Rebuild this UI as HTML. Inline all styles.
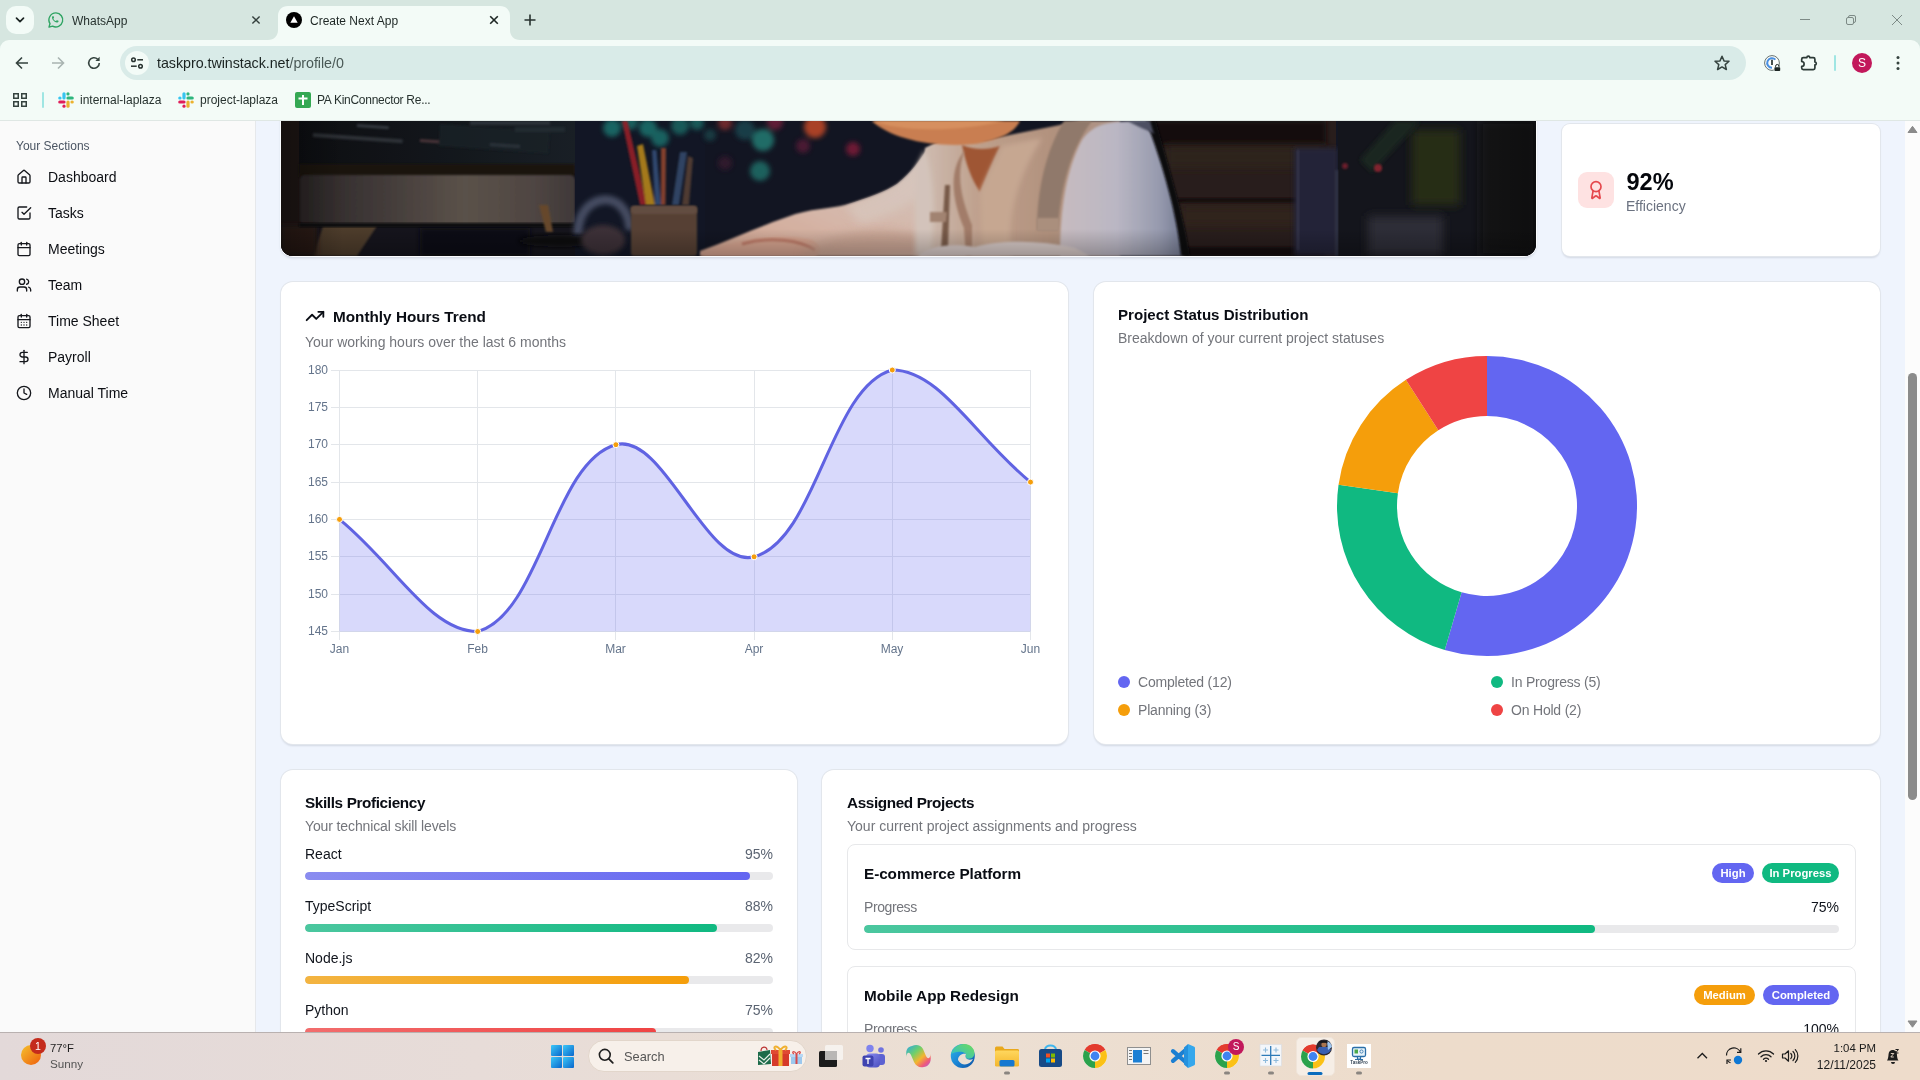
<!DOCTYPE html>
<html lang="en">
<head>
<meta charset="utf-8">
<title>Create Next App</title>
<style>
*{box-sizing:border-box;margin:0;padding:0}
html,body{width:1920px;height:1080px;overflow:hidden;background:#eef4fd}
body{font-family:"Liberation Sans","DejaVu Sans",sans-serif;color:#0b0f19;position:relative;-webkit-font-smoothing:antialiased}
.abs{position:absolute}
svg{display:block;overflow:visible}
/* ---------- browser chrome ---------- */
#tabstrip{position:absolute;left:0;top:0;width:1920px;height:52px;background:#d6e6e0}
#toolbar{position:absolute;left:0;top:40px;width:1920px;height:80px;background:#f3fbf7;border-radius:9px 9px 0 0}
#chromeline{position:absolute;left:0;top:120px;width:1920px;height:1px;background:#dfe7e4}
.tabtxt{position:absolute;top:13px;font-size:12px;color:#27322f;white-space:nowrap;line-height:16px}
#omni{position:absolute;left:120px;top:46px;width:1626px;height:34px;border-radius:17px;background:#d9ebe8}
#url{position:absolute;left:157px;top:54px;font-size:14.3px;line-height:18px;color:#1a2321;white-space:nowrap;letter-spacing:-0.05px}
#url span{color:#4a5956}
.bm{position:absolute;top:92px;font-size:12px;line-height:16px;color:#27322f;white-space:nowrap}
/* ---------- sidebar ---------- */
#side{position:absolute;left:0;top:121px;width:256px;height:911px;background:#fafafa;border-right:1px solid #e6e8eb}
#side .lbl{position:absolute;left:16px;top:17px;font-size:12px;line-height:16px;color:#4b5563}
.nav{position:absolute;left:16px;height:20px;display:flex;align-items:center;font-size:14px;color:#0c0e13;white-space:nowrap}
.nav svg{width:16px;height:16px;margin-right:16px;stroke:#15171c;fill:none;stroke-width:2;stroke-linecap:round;stroke-linejoin:round}
/* ---------- main ---------- */
#main{position:absolute;left:256px;top:121px;width:1649px;height:911px;background:#eff4fd;overflow:hidden}
.card{position:absolute;background:#fff;border-radius:12px;box-shadow:0 0 0 1px #e2e6ec,0 1.5px 2px rgba(40,50,70,.14)}
.h3{position:absolute;font-weight:700;font-size:16px;line-height:20px;color:#0a0d14;white-space:nowrap}
.sub{position:absolute;font-size:13.6px;line-height:18px;color:#73757b;white-space:nowrap}
.tick{font-family:"Liberation Sans",sans-serif;font-size:12px;fill:#64748b}
.bar{position:absolute;height:8px;border-radius:4px;background:#e9e9eb;overflow:hidden}
.bar i{display:block;height:8px;border-radius:4px}
.sk{position:absolute;font-size:14px;line-height:18px;color:#10141c;white-space:nowrap}
.pc{position:absolute;font-size:14px;line-height:18px;color:#5b6472;white-space:nowrap;text-align:right}
.badge{position:absolute;height:20px;border-radius:10px;color:#fff;font-weight:700;font-size:11.3px;line-height:20px;text-align:center;white-space:nowrap}
/* ---------- scrollbar ---------- */
#sb{position:absolute;left:1905px;top:121px;width:15px;height:911px;background:#fcfcfc}
/* ---------- taskbar ---------- */
#task{position:absolute;left:0;top:1032px;width:1920px;height:48px;background:linear-gradient(90deg,#e3d9d9 0%,#e7dcd8 25%,#ecdfd3 50%,#eddccb 75%,#eedccb 100%);border-top:1px solid #b9b1b0}
</style>
</head>
<body>
<div id="root" style="position:absolute;left:0;top:0;width:1920px;height:1080px;overflow:hidden;will-change:transform">
<!-- ================= BROWSER CHROME ================= -->
<div id="tabstrip"></div>
<div id="toolbar"></div>
<div id="chromeline"></div>
<!-- tab search button -->
<div class="abs" style="left:6px;top:6px;width:28px;height:28px;border-radius:10px;background:#f3fbf7"></div>
<svg class="abs" style="left:14px;top:14px" width="12" height="12" viewBox="0 0 12 12"><path d="M2.5 4.2 L6 7.7 L9.5 4.2" fill="none" stroke="#1d2624" stroke-width="1.7" stroke-linecap="round" stroke-linejoin="round"/></svg>
<!-- whatsapp tab -->
<svg class="abs" style="left:48px;top:12px" width="16" height="16" viewBox="0 0 16 16"><path d="M8 0.9a7 7 0 0 0-6 10.7L1 15.1l3.6-.95A7 7 0 1 0 8 .9z" fill="none" stroke="#2fa463" stroke-width="1.400" stroke-linejoin="round"/><path d="M5.6 4.4c-.2-.4-.5-.4-.8-.3-.6.4-.9 1-.8 1.700.3 1.600 1.300 2.900 2.700 3.900 1 .700 2 .900 2.800.700.600-.200 1-.600 1.100-1.200 0-.200 0-.300-.200-.400l-1.300-.600c-.200-.100-.400 0-.500.100l-.500.600c-.100.100-.300.200-.500.100-1-.5-1.700-1.200-2.200-2.100-.1-.2 0-.3.100-.4l.4-.5c.1-.2.1-.3.1-.5z" fill="#2fa463"/></svg>
<div class="tabtxt" style="left:72px">WhatsApp</div>
<svg class="abs" style="left:250px;top:14px" width="12" height="12" viewBox="0 0 12 12"><path d="M2.400 2.400 9.600 9.600M9.600 2.400 2.400 9.600" stroke="#34403d" stroke-width="1.400" fill="none"/></svg>
<!-- active tab -->
<svg class="abs" style="left:268px;top:6px" width="252" height="34" viewBox="0 0 252 34"><path d="M0 34 C6 34 10 30 10 24 L10 10 C10 4 14 0 20 0 L232 0 C238 0 242 4 242 10 L242 24 C242 30 246 34 252 34 Z" fill="#f3fbf7"/></svg>
<svg class="abs" style="left:286px;top:12px" width="16" height="16" viewBox="0 0 16 16"><circle cx="8" cy="8" r="8" fill="#000"/><path d="M8 4.300 L11.700 10.700 L4.300 10.700 Z" fill="#fff"/></svg>
<div class="tabtxt" style="left:310px;color:#1d2624">Create Next App</div>
<svg class="abs" style="left:488px;top:14px" width="12" height="12" viewBox="0 0 12 12"><path d="M2.200 2.200 9.800 9.800M9.800 2.200 2.200 9.800" stroke="#1d2624" stroke-width="1.600" fill="none"/></svg>
<svg class="abs" style="left:523px;top:13px" width="14" height="14" viewBox="0 0 14 14"><path d="M7 1.500V12.500M1.500 7H12.500" stroke="#27322f" stroke-width="1.600" fill="none"/></svg>
<!-- window controls -->
<svg class="abs" style="left:1799px;top:14px" width="12" height="12" viewBox="0 0 12 12"><path d="M1 5.500H11" stroke="#7d8a86" stroke-width="1" fill="none"/></svg>
<svg class="abs" style="left:1845px;top:14px" width="12" height="12" viewBox="0 0 12 12"><rect x="1.500" y="3.500" width="7" height="7" rx="1.500" fill="none" stroke="#7d8a86" stroke-width="1"/><path d="M3.500 3.500V3A1.500 1.500 0 0 1 5 1.500H9A1.500 1.500 0 0 1 10.500 3V7A1.500 1.500 0 0 1 9 8.500H8.500" fill="none" stroke="#7d8a86" stroke-width="1"/></svg>
<svg class="abs" style="left:1891px;top:14px" width="12" height="12" viewBox="0 0 12 12"><path d="M1 1 11 11M11 1 1 11" stroke="#7d8a86" stroke-width="1" fill="none"/></svg>
<!-- nav buttons -->
<svg class="abs" style="left:14px;top:55px" width="16" height="16" viewBox="0 0 16 16"><path d="M14 8H2.800M8 2.500 2.500 8 8 13.500" fill="none" stroke="#35433f" stroke-width="1.600"/></svg>
<svg class="abs" style="left:50px;top:55px" width="16" height="16" viewBox="0 0 16 16"><path d="M2 8H13.200M8 2.500 13.500 8 8 13.500" fill="none" stroke="#a9b4b1" stroke-width="1.600"/></svg>
<svg class="abs" style="left:86px;top:55px" width="16" height="16" viewBox="0 0 16 16"><path d="M13.300 8A5.300 5.300 0 1 1 11.700 4.200" fill="none" stroke="#35433f" stroke-width="1.600"/><path d="M13.600 1.700V5.900H9.400Z" fill="#35433f"/></svg>
<!-- omnibox -->
<div id="omni"></div>
<div class="abs" style="left:125px;top:51px;width:24px;height:24px;border-radius:12px;background:#f3fbf7"></div>
<svg class="abs" style="left:129px;top:55px" width="16" height="16" viewBox="0 0 16 16"><g fill="none" stroke="#27322f" stroke-width="1.500"><circle cx="4.500" cy="4.800" r="1.800"/><path d="M8.300 4.800H14"/><circle cx="11.500" cy="11.200" r="1.800"/><path d="M2 11.200H7.700"/></g></svg>
<div id="url">taskpro.twinstack.net<span>/profile/0</span></div>
<svg class="abs" style="left:1713px;top:54px" width="18" height="18" viewBox="0 0 18 18"><path d="M9 2.300 11 6.900 16 7.300 12.200 10.600 13.400 15.500 9 12.900 4.600 15.500 5.800 10.600 2 7.300 7 6.900Z" fill="none" stroke="#35433f" stroke-width="1.500" stroke-linejoin="round"/></svg>
<!-- extension icons -->
<svg class="abs" style="left:1762px;top:53px" width="20" height="20" viewBox="1762 53 20 20"><circle cx="1772" cy="63" r="7.400" fill="#fbfdfc" stroke="#66726f" stroke-width="1"/><path d="M1775.400 59.600 A4.800 4.800 0 1 0 1772 67.800" fill="none" stroke="#4a90e2" stroke-width="2"/><path d="M1772 59.800V65" stroke="#27322f" stroke-width="1.700"/><rect x="1773.800" y="66.300" width="7" height="5.200" rx="1" fill="#f3fbf7"/><rect x="1774.400" y="67.200" width="5.800" height="3.800" rx=".8" fill="#1d2624"/><path d="M1775.600 67.200V66.200A1.700 1.700 0 0 1 1779 66.200V67.200" fill="none" stroke="#1d2624" stroke-width="1"/></svg>
<svg class="abs" style="left:1799px;top:53px" width="20" height="20" viewBox="1799 53 20 20"><path d="M1803.300 57.600 H1806.900 A1.400 1.400 0 0 1 1809.700 57.600 H1813.300 A1.600 1.600 0 0 1 1814.900 59.200 V62 A1.400 1.400 0 0 1 1814.900 64.800 V68 A1.600 1.600 0 0 1 1813.300 69.600 H1803.300 A1.600 1.600 0 0 1 1801.700 68 V66.300 A2.400 2.400 0 0 0 1801.700 61.500 V59.200 A1.600 1.600 0 0 1 1803.300 57.600 Z" fill="none" stroke="#2c3a37" stroke-width="1.700" stroke-linejoin="round"/></svg>
<div class="abs" style="left:1834px;top:55px;width:2px;height:16px;border-radius:1px;background:#9fe6e3"></div>
<div class="abs" style="left:1852px;top:53px;width:20px;height:20px;border-radius:10px;background:#c2185b;color:#fff;font-size:12px;line-height:20px;text-align:center">S</div>
<svg class="abs" style="left:1889px;top:54px" width="18" height="18" viewBox="0 0 18 18"><g fill="#35433f"><circle cx="9" cy="3.500" r="1.500"/><circle cx="9" cy="9" r="1.500"/><circle cx="9" cy="14.500" r="1.500"/></g></svg>
<!-- bookmarks bar -->
<svg class="abs" style="left:12px;top:92px" width="16" height="16" viewBox="0 0 16 16"><g fill="none" stroke="#35433f" stroke-width="1.500"><rect x="1.750" y="1.750" width="4.500" height="4.500"/><rect x="9.750" y="1.750" width="4.500" height="4.500"/><rect x="1.750" y="9.750" width="4.500" height="4.500"/><rect x="9.750" y="9.750" width="4.500" height="4.500"/></g></svg>
<div class="abs" style="left:42px;top:92px;width:2px;height:16px;border-radius:1px;background:#9fe6e3"></div>
<svg class="abs" style="left:58px;top:92px" width="16" height="16" viewBox="0 0 16 16" id="slk"><g stroke-width="3.200" stroke-linecap="round" fill="none"><path d="M6 1.800V6" stroke="#36c5f0"/><path d="M1.800 6H2" stroke="#36c5f0"/><path d="M14.200 6H10" stroke="#2eb67d"/><path d="M10 1.800V2" stroke="#2eb67d"/><path d="M10 14.200V10" stroke="#ecb22e"/><path d="M14.200 10H14" stroke="#ecb22e"/><path d="M1.800 10H6" stroke="#e01e5a"/><path d="M6 14.200V14" stroke="#e01e5a"/></g></svg>
<div class="bm" style="left:80px">internal-laplaza</div>
<svg class="abs" style="left:178px;top:92px" width="16" height="16" viewBox="0 0 16 16"><g stroke-width="3.200" stroke-linecap="round" fill="none"><path d="M6 1.800V6" stroke="#36c5f0"/><path d="M1.800 6H2" stroke="#36c5f0"/><path d="M14.200 6H10" stroke="#2eb67d"/><path d="M10 1.800V2" stroke="#2eb67d"/><path d="M10 14.200V10" stroke="#ecb22e"/><path d="M14.200 10H14" stroke="#ecb22e"/><path d="M1.800 10H6" stroke="#e01e5a"/><path d="M6 14.200V14" stroke="#e01e5a"/></g></svg>
<div class="bm" style="left:200px">project-laplaza</div>
<svg class="abs" style="left:295px;top:92px" width="16" height="16" viewBox="0 0 16 16"><rect x="0" y="0" width="16" height="16" rx="2" fill="#34a853"/><path d="M8 3V13M3.500 6.500H12.500" stroke="#fff" stroke-width="2" fill="none"/></svg>
<div class="bm" style="left:317px;letter-spacing:-0.28px">PA KinConnector Re...</div>
<!--CHROME-->

<!-- ================= SIDEBAR ================= -->
<div id="side">
<div class="lbl">Your Sections</div>
<div class="nav" style="top:46px"><svg viewBox="0 0 24 24"><path d="M15 21v-8a1 1 0 0 0-1-1h-4a1 1 0 0 0-1 1v8"/><path d="M3 10a2 2 0 0 1 .709-1.528l7-5.999a2 2 0 0 1 2.582 0l7 5.999A2 2 0 0 1 21 10v9a2 2 0 0 1-2 2H5a2 2 0 0 1-2-2z"/></svg>Dashboard</div>
<div class="nav" style="top:82px"><svg viewBox="0 0 24 24"><path d="m9 11 3 3L22 4"/><path d="M21 12v7a2 2 0 0 1-2 2H5a2 2 0 0 1-2-2V5a2 2 0 0 1 2-2h11"/></svg>Tasks</div>
<div class="nav" style="top:118px"><svg viewBox="0 0 24 24"><path d="M8 2v4"/><path d="M16 2v4"/><rect width="18" height="18" x="3" y="4" rx="2"/><path d="M3 10h18"/></svg>Meetings</div>
<div class="nav" style="top:154px"><svg viewBox="0 0 24 24"><path d="M16 21v-2a4 4 0 0 0-4-4H6a4 4 0 0 0-4 4v2"/><circle cx="9" cy="7" r="4"/><path d="M22 21v-2a4 4 0 0 0-3-3.870"/><path d="M16 3.130a4 4 0 0 1 0 7.750"/></svg>Team</div>
<div class="nav" style="top:190px"><svg viewBox="0 0 24 24"><path d="M8 2v4"/><path d="M16 2v4"/><rect width="18" height="18" x="3" y="4" rx="2"/><path d="M3 10h18"/><path d="M8 14h.01"/><path d="M12 14h.01"/><path d="M16 14h.01"/><path d="M8 18h.01"/><path d="M12 18h.01"/><path d="M16 18h.01"/></svg>Time Sheet</div>
<div class="nav" style="top:226px"><svg viewBox="0 0 24 24"><line x1="12" x2="12" y1="2" y2="22"/><path d="M17 5H9.500a3.500 3.500 0 0 0 0 7h5a3.500 3.500 0 0 1 0 7H6"/></svg>Payroll</div>
<div class="nav" style="top:262px"><svg viewBox="0 0 24 24"><circle cx="12" cy="12" r="10"/><polyline points="12 6 12 12 16 14"/></svg>Manual Time</div>
<!--NAV-->
</div>

<!-- ================= MAIN ================= -->
<div id="main">
<div class="abs" id="pg" style="left:-256px;top:-121px;width:1920px;height:1080px">
<!-- hero image -->
<div class="abs" id="hero" style="left:281px;top:100px;width:1255px;height:156px;border-radius:0 0 12px 12px;overflow:hidden;background:#15141a;box-shadow:0 0 0 1px #fbfcfe,0 2px 3px rgba(40,50,70,.18)">
<svg class="abs" style="left:0;top:21px" width="1255" height="135" viewBox="281 121 1255 135" preserveAspectRatio="none">
<defs>
<filter id="b1" x="-20%" y="-20%" width="140%" height="140%"><feGaussianBlur stdDeviation="1.300"/></filter>
<filter id="b2" x="-20%" y="-20%" width="140%" height="140%"><feGaussianBlur stdDeviation="2.600"/></filter>
<filter id="b4" x="-30%" y="-30%" width="160%" height="160%"><feGaussianBlur stdDeviation="5"/></filter>
<filter id="b8" x="-40%" y="-40%" width="180%" height="180%"><feGaussianBlur stdDeviation="9"/></filter>
<linearGradient id="chin" x1="0" x2="1" y1="0" y2="0"><stop offset="0" stop-color="#2f2a29"/><stop offset=".25" stop-color="#453d3b"/><stop offset=".6" stop-color="#645a51"/><stop offset=".85" stop-color="#574d48"/><stop offset="1" stop-color="#463e3d"/></linearGradient>
<linearGradient id="scr" x1="0" x2="1" y1="0" y2="0"><stop offset="0" stop-color="#0e0f12"/><stop offset=".5" stop-color="#14181c"/><stop offset="1" stop-color="#1b2228"/></linearGradient>
<linearGradient id="sleeveR" x1="0" x2="1" y1="0" y2="0"><stop offset="0" stop-color="#ddd0d3"/><stop offset=".45" stop-color="#cfcbd8"/><stop offset=".8" stop-color="#a7abc0"/><stop offset="1" stop-color="#7f86a0"/></linearGradient>
<linearGradient id="arm" x1="0" x2="1" y1="1" y2="0"><stop offset="0" stop-color="#e6b29a"/><stop offset=".35" stop-color="#ecc9b8"/><stop offset=".7" stop-color="#ead8cd"/><stop offset="1" stop-color="#e2cdc0"/></linearGradient>
<linearGradient id="hood" x1="0" x2="1" y1="0" y2="0"><stop offset="0" stop-color="#e6d2c5"/><stop offset=".3" stop-color="#d3b19a"/><stop offset=".65" stop-color="#c6a28b"/><stop offset="1" stop-color="#bfa394"/></linearGradient>
<linearGradient id="panel" x1="0" x2="0" y1="0" y2="1"><stop offset="0" stop-color="#1b1312"/><stop offset=".35" stop-color="#33262200"/><stop offset="1" stop-color="#1b131200"/></linearGradient>
<linearGradient id="vig" x1="0" x2="1" y1="0" y2="0"><stop offset="0" stop-color="#000" stop-opacity=".3"/><stop offset=".05" stop-color="#000" stop-opacity="0"/><stop offset=".95" stop-color="#000" stop-opacity="0"/><stop offset="1" stop-color="#000" stop-opacity=".3"/></linearGradient>
<linearGradient id="vigb" x1="0" x2="0" y1="0" y2="1"><stop offset="0" stop-color="#000" stop-opacity="0"/><stop offset=".8" stop-color="#000" stop-opacity="0"/><stop offset="1" stop-color="#000" stop-opacity=".25"/></linearGradient>
</defs>
<!-- base -->
<rect x="281" y="121" width="1255" height="135" fill="#141724"/>
<!-- left: wall + monitor -->
<rect x="281" y="121" width="20" height="135" fill="#211815"/>
<rect x="299" y="121" width="276" height="52" fill="url(#scr)"/>
<g filter="url(#b1)" opacity=".7"><rect x="313" y="133" width="90" height="4" fill="#3f454a" transform="rotate(4 313 133)"/><rect x="357" y="124" width="32" height="3" fill="#4a5056" transform="rotate(4 357 124)"/><rect x="420" y="139" width="22" height="3" fill="#6a474c" transform="rotate(4 420 139)"/><rect x="440" y="124" width="110" height="22" fill="#1d252b" transform="rotate(4 440 124)"/><rect x="470" y="121" width="80" height="4" fill="#3a4248"/><rect x="515" y="127" width="50" height="5" fill="#2c353b"/><rect x="490" y="143" width="30" height="3" fill="#39424a" transform="rotate(4 490 143)"/></g>
<rect x="299" y="164" width="276" height="13" fill="#1a1211" filter="url(#b1)"/>
<rect x="300" y="175" width="275" height="50" rx="5" fill="url(#chin)" filter="url(#b1)"/>
<rect x="281" y="225" width="300" height="31" fill="#17161d"/>
<path d="M313 256 L323 226 L377 226 L357 256Z" fill="#54432f" filter="url(#b1)"/>
<rect x="281" y="225" width="36" height="31" fill="#2e1f17" filter="url(#b2)"/>
<rect x="420" y="228" width="110" height="28" fill="#0c0f18" filter="url(#b2)"/>
<rect x="299" y="223" width="276" height="4" fill="#0e0c0e" filter="url(#b1)"/>
<!-- right of monitor -->
<rect x="575" y="121" width="130" height="135" fill="#131827"/>
<!-- desk items -->
<path d="M539 205 L546 232 L553 232 L548 205Z" fill="#71502e" filter="url(#b1)"/>
<path d="M578 236 C576 192 628 186 630 230" fill="none" stroke="#4d546c" stroke-width="9" filter="url(#b2)"/>
<ellipse cx="560" cy="241" rx="42" ry="6" fill="#0b0b0e" filter="url(#b2)"/>
<ellipse cx="603" cy="240" rx="22" ry="15" fill="#43363a" filter="url(#b2)"/>
<!-- bokeh -->
<g filter="url(#b2)" opacity=".85"><circle cx="612" cy="128" r="9" fill="#1f7f78"/><circle cx="630" cy="122" r="8" fill="#1d7670"/><circle cx="648" cy="128" r="9" fill="#1f7f78"/><circle cx="660" cy="138" r="9" fill="#1e7a74"/><circle cx="680" cy="126" r="9" fill="#1c706b"/><circle cx="697" cy="123" r="7" fill="#1c706b"/>
<circle cx="763" cy="140" r="11" fill="#27897f"/><circle cx="760" cy="171" r="10" fill="#227a72"/><circle cx="745" cy="130" r="10" fill="#1b4b55"/><circle cx="815" cy="127" r="11" fill="#d9512c"/><circle cx="853" cy="149" r="7" fill="#8c1f3d"/><circle cx="803" cy="146" r="7" fill="#5d1c3a"/><circle cx="725" cy="123" r="7" fill="#8c3030"/><circle cx="775" cy="122" r="8" fill="#7a2440"/><circle cx="725" cy="163" r="7" fill="#3a1a30"/><circle cx="710" cy="135" r="6" fill="#1a4a50"/></g>
<!-- pencils -->
<g filter="url(#b1)" opacity=".92"><path d="M622 121 L627.500 121 L647 205 L640 205Z" fill="#a3242a"/><path d="M637 146 L643 144 L655 205 L646 205Z" fill="#c4901c"/><path d="M652 150 L656.500 150 L661 205 L655 205Z" fill="#37527f"/><path d="M661 148 L666 148 L665.500 205 L661 205Z" fill="#9c4c33"/><path d="M680 152 L687 152 L679 205 L672 205Z" fill="#384f72"/><path d="M688 156 L693 158 L689 205 L682 205Z" fill="#5d4537"/></g>
<rect x="631" y="206" width="66" height="50" rx="3" fill="#5e4638" filter="url(#b1)"/>
<rect x="631" y="206" width="66" height="8" rx="3" fill="#6d5446" filter="url(#b1)"/>
<!-- character: arm -->
<path d="M700 256 L700 251 C730 240 760 226 787 217 C810 208 830 209 845 205 C870 197 885 192 897 184 C912 172 920 160 927 149 L960 130 L1000 256Z" fill="url(#arm)" filter="url(#b1)"/>
<clipPath id="armclip"><path d="M700 256 L700 251 C730 240 760 226 787 217 C810 208 830 209 845 205 C870 197 885 192 897 184 C912 172 920 160 927 149 L960 130 L1000 256Z"/></clipPath><g clip-path="url(#armclip)"><path d="M845 205 C870 197 885 192 897 184 C912 172 920 160 927 149 L945 160 C935 190 900 215 860 225Z" fill="#f0ddd2" filter="url(#b4)" opacity=".7"/></g>
<path d="M705 253 C740 238 780 232 812 240 C822 246 822 252 815 256 L700 256Z" fill="#eab49c" filter="url(#b1)"/>
<path d="M742 244 C770 236 800 240 815 250" fill="none" stroke="#cf8570" stroke-width="3" filter="url(#b1)"/>
<g clip-path="url(#armclip)"><path d="M800 256 C830 230 880 225 920 235 L925 256Z" fill="#d9b09c" filter="url(#b4)" opacity=".8"/></g>
<!-- hoodie body -->
<path d="M925 148 C940 140 960 135 985 140 L1080 121 L1120 121 L1120 256 L920 256 L925 200Z" fill="url(#hood)" filter="url(#b1)"/>
<path d="M925 150 C935 180 935 220 930 256 L915 256 L915 170Z" fill="#ead9ce" filter="url(#b2)"/>
<!-- chin / face -->
<path d="M872 121 C890 138 930 148 975 144 C1000 140 1015 132 1020 121Z" fill="#df8c58" filter="url(#b1)"/>
<path d="M872 121 C900 131 950 133 1005 121Z" fill="#ee9f68" filter="url(#b1)"/>
<!-- neck shadow -->
<path d="M962 145 C966 165 972 180 980 192 C986 178 992 162 1000 146 C988 150 974 150 962 145Z" fill="#b05f38" filter="url(#b1)"/>
<path d="M1002 146 C994 162 986 178 980 192 L982 256 L1012 256 C1006 220 1016 180 1042 138Z" fill="#dcb9a0" filter="url(#b2)"/>
<path d="M965 150 C955 175 962 200 972 225 L972 256 L966 256 L964 228 C952 200 948 170 965 150Z" fill="#b48a73" filter="url(#b1)"/>
<path d="M945 185 L950 185 L948 250 L941 250Z" fill="#84644f" filter="url(#b1)"/>
<path d="M930 212 L947 212 L946 222 L930 222Z" fill="#b3917c" filter="url(#b1)"/>
<!-- backpack strap -->
<path d="M1064 121 L1092 121 C1070 150 1060 190 1058 230 L1037 230 C1037 190 1046 150 1064 121Z" fill="#a08674" filter="url(#b1)"/>
<rect x="1037" y="218" width="22" height="13" fill="#bd9f8a" filter="url(#b1)"/>
<!-- chair (behind sleeve) -->
<rect x="1150" y="121" width="186" height="135" fill="#2c201d"/>
<rect x="1150" y="121" width="176" height="24" fill="#150f0f" filter="url(#b2)"/>
<rect x="1165" y="146" width="160" height="22" fill="#33261f" filter="url(#b4)"/>
<rect x="1178" y="198" width="146" height="5" fill="#120d0d" filter="url(#b1)"/>
<rect x="1180" y="206" width="140" height="20" fill="#34271f" filter="url(#b4)"/>
<rect x="1185" y="247" width="140" height="9" fill="#120d0d" filter="url(#b1)"/>
<rect x="1294" y="148" width="44" height="108" fill="#26263c" filter="url(#b2)"/>
<rect x="1297" y="150" width="2" height="100" fill="#3c3c54" filter="url(#b1)"/>
<!-- right sleeve -->
<path d="M1082 140 C1095 122 1110 121 1150 121 C1165 165 1180 215 1184 256 L1060 256 C1060 210 1066 170 1082 140Z" fill="url(#sleeveR)" filter="url(#b1)"/>
<path d="M1146 121 L1156 121 C1168 165 1184 215 1190 256 L1181 256 C1177 215 1163 165 1146 121Z" fill="#0c0c10" filter="url(#b1)"/>
<path d="M1128 121 L1150 121 L1154 134 C1148 130 1140 128 1128 121Z" fill="#55586c" filter="url(#b1)"/>
<!-- hands bottom -->
<path d="M918 256 C928 246 950 243 975 247 C1000 240 1040 240 1075 248 L1090 256Z" fill="#ecdeda" filter="url(#b1)"/>
<!-- right bg -->
<rect x="1338" y="121" width="198" height="135" fill="#16171d"/>
<rect x="1335" y="170" width="3" height="86" fill="#36384c" filter="url(#b1)"/>
<rect x="1412" y="130" width="48" height="75" fill="#2c3318" filter="url(#b4)"/>
<path d="M1360 160 L1395 121 L1420 121 L1372 172Z" fill="#1c2a22" filter="url(#b2)"/>
<circle cx="1345" cy="166" r="3" fill="#74202f" filter="url(#b1)"/><circle cx="1378" cy="168" r="4" fill="#8f2833" filter="url(#b1)"/>
<rect x="1368" y="216" width="75" height="40" fill="#30303a" filter="url(#b4)"/>
<rect x="1480" y="121" width="56" height="135" fill="#131318" filter="url(#b4)"/>
<!-- overall darken + vignette -->
<rect x="281" y="121" width="1255" height="135" fill="#0a0a14" opacity=".10"/>
<rect x="281" y="121" width="1255" height="135" fill="url(#vig)"/>
<rect x="281" y="121" width="1255" height="135" fill="url(#vigb)"/>
</svg>

</div>
<!-- efficiency card -->
<div class="card" style="left:1562px;top:124px;width:318px;height:132px;border-radius:8px"></div>
<div class="abs" style="left:1578px;top:172px;width:36px;height:36px;border-radius:9px;background:#fee2e2"></div>
<svg class="abs" style="left:1586px;top:180px" width="20" height="20" viewBox="0 0 24 24" fill="none" stroke="#e5484d" stroke-width="2" stroke-linecap="round" stroke-linejoin="round"><path d="m15.477 12.890 1.515 8.526a.5.5 0 0 1-.810.470l-3.580-2.687a1 1 0 0 0-1.197 0l-3.586 2.686a.5.5 0 0 1-.810-.469l1.514-8.526"/><circle cx="12" cy="8" r="6"/></svg>
<div class="abs" style="left:1626.500px;top:166px;font-weight:700;font-size:23.500px;line-height:32px;color:#05070c;white-space:nowrap">92%</div>
<div class="abs" style="left:1626px;top:197px;font-size:14px;line-height:18px;color:#6b7280;white-space:nowrap">Efficiency</div>

<!-- ===== Monthly hours card ===== -->
<div class="card" style="left:281px;top:282px;width:787px;height:462px"></div>
<svg class="abs" style="left:305px;top:306px" width="20" height="20" viewBox="0 0 24 24" fill="none" stroke="#0a0d14" stroke-width="2.200" stroke-linecap="round" stroke-linejoin="round"><polyline points="22 7 13.500 15.500 8.500 10.500 2 17"/><polyline points="16 7 22 7 22 13"/></svg>
<div class="h3" style="left:333px;top:307px;font-size:15.300px">Monthly Hours Trend</div>
<div class="sub" style="left:305px;top:333px;font-size:14px">Your working hours over the last 6 months</div>
<svg class="abs" style="left:0;top:0" width="1920" height="1080" viewBox="0 0 1920 1080">
<g stroke="#e3e6ea" stroke-width="1" fill="none">
<path d="M331 370.500H1031M331 407.500H1031M331 444.500H1031M331 482.500H1031M331 519.500H1031M331 556.500H1031M331 594.500H1031M331 631.500H1031"/>
<path d="M339.500 370V640M477.500 370V640M615.500 370V640M754.500 370V640M892.500 370V640M1030.500 370V640"/>
</g>
<path d="M339.500 519.400 C394.800 564.300 429.800 631.500 477.700 631.500 C540.300 614.600 553.300 461.600 615.900 444.700 C663.800 431.800 706.200 569.700 754.100 556.800 C816.700 539.900 829.700 386.900 892.300 370.000 C940.200 370.000 975.200 437.200 1030.500 482.100 L1030.500 631.500 L339.500 631.500 Z" fill="rgba(99,102,241,0.250)"/>
<path d="M339.500 519.400 C394.800 564.300 429.800 631.500 477.700 631.500 C540.300 614.600 553.300 461.600 615.900 444.700 C663.800 431.800 706.200 569.700 754.100 556.800 C816.700 539.900 829.700 386.900 892.300 370.000 C940.200 370.000 975.200 437.200 1030.500 482.100" fill="none" stroke="#6063e2" stroke-width="3" stroke-linecap="butt"/>
<g fill="#f59e0b" stroke="#fff" stroke-width="1"><circle cx="339.500" cy="519.400" r="3"/><circle cx="477.700" cy="631.500" r="3"/><circle cx="615.900" cy="444.700" r="3"/><circle cx="754.100" cy="556.800" r="3"/><circle cx="892.300" cy="370" r="3"/><circle cx="1030.500" cy="482.100" r="3"/></g>
<g class="tick" text-anchor="end"><text x="328" y="373.500">180</text><text x="328" y="410.800">175</text><text x="328" y="448.100">170</text><text x="328" y="485.500">165</text><text x="328" y="522.800">160</text><text x="328" y="560.200">155</text><text x="328" y="597.500">150</text><text x="328" y="634.900">145</text></g>
<g class="tick" text-anchor="middle"><text x="339.500" y="653">Jan</text><text x="477.500" y="653">Feb</text><text x="615.500" y="653">Mar</text><text x="754" y="653">Apr</text><text x="892" y="653">May</text><text x="1030.500" y="653">Jun</text></g>
</svg>

<!-- ===== Project status card ===== -->
<div class="card" style="left:1094px;top:282px;width:786px;height:462px"></div>
<div class="h3" style="left:1118px;top:305px;font-size:15.100px">Project Status Distribution</div>
<div class="sub" style="left:1118px;top:329px;font-size:14px">Breakdown of your current project statuses</div>
<svg class="abs" style="left:0;top:0" width="1920" height="1080" viewBox="0 0 1920 1080">
<path d="M1487.000 356.000 A150 150 0 1 1 1444.740 649.920 L1461.640 592.350 A90 90 0 1 0 1487.000 416.000 Z" fill="#6366f1"/>
<path d="M1444.740 649.920 A150 150 0 0 1 1338.530 484.650 L1397.920 493.190 A90 90 0 0 0 1461.640 592.350 Z" fill="#10b981"/>
<path d="M1338.530 484.650 A150 150 0 0 1 1405.900 379.810 L1438.340 430.290 A90 90 0 0 0 1397.920 493.190 Z" fill="#f59e0b"/>
<path d="M1405.900 379.810 A150 150 0 0 1 1487.000 356.000 L1487.000 416.000 A90 90 0 0 0 1438.340 430.290 Z" fill="#ef4444"/>
<circle cx="1124" cy="682" r="6" fill="#6366f1"/><circle cx="1497" cy="682" r="6" fill="#10b981"/><circle cx="1124" cy="710" r="6" fill="#f59e0b"/><circle cx="1497" cy="710" r="6" fill="#ef4444"/>
</svg>
<div class="sub" style="left:1138px;top:673px;font-size:14px;letter-spacing:-0.2px">Completed (12)</div>
<div class="sub" style="left:1511px;top:673px;font-size:14px;letter-spacing:-0.2px">In Progress (5)</div>
<div class="sub" style="left:1138px;top:701px;font-size:14px;letter-spacing:-0.2px">Planning (3)</div>
<div class="sub" style="left:1511px;top:701px;font-size:14px;letter-spacing:-0.2px">On Hold (2)</div>

<!-- ===== Skills card ===== -->
<div class="card" style="left:281px;top:770px;width:516px;height:400px"></div>
<div class="h3" style="left:305px;top:793px;font-size:15.300px;letter-spacing:-0.37px">Skills Proficiency</div>
<div class="sub" style="left:305px;top:817px;font-size:14px;letter-spacing:-0.12px">Your technical skill levels</div>
<div class="sk" style="left:305px;top:845px">React</div><div class="pc" style="left:713px;width:60px;top:845px">95%</div>
<div class="bar" style="left:305px;top:872px;width:468px"><i style="width:95%;background:linear-gradient(90deg,#8a8cf0,#6366f1)"></i></div>
<div class="sk" style="left:305px;top:897px">TypeScript</div><div class="pc" style="left:713px;width:60px;top:897px">88%</div>
<div class="bar" style="left:305px;top:924px;width:468px"><i style="width:88%;background:linear-gradient(90deg,#4bc79f,#10b981)"></i></div>
<div class="sk" style="left:305px;top:949px">Node.js</div><div class="pc" style="left:713px;width:60px;top:949px">82%</div>
<div class="bar" style="left:305px;top:976px;width:468px"><i style="width:82%;background:linear-gradient(90deg,#f3b441,#f59e0b)"></i></div>
<div class="sk" style="left:305px;top:1001px">Python</div><div class="pc" style="left:713px;width:60px;top:1001px">75%</div>
<div class="bar" style="left:305px;top:1028px;width:468px"><i style="width:75%;background:linear-gradient(90deg,#f26d6d,#ef4444)"></i></div>

<!-- ===== Assigned projects card ===== -->
<div class="card" style="left:822px;top:770px;width:1058px;height:400px"></div>
<div class="h3" style="left:847px;top:793px;font-size:15.300px;letter-spacing:-0.38px">Assigned Projects</div>
<div class="sub" style="left:847px;top:817px;font-size:14px">Your current project assignments and progress</div>
<div class="abs" style="left:847px;top:844px;width:1009px;height:106px;border:1px solid #e7e8ea;border-radius:8px;background:#fff"></div>
<div class="h3" style="left:864px;top:864px;font-size:15.300px;letter-spacing:-0.06px">E-commerce Platform</div>
<div class="badge" style="left:1712px;top:863px;width:42px;background:#6366f1">High</div>
<div class="badge" style="left:1762px;top:863px;width:77px;background:#10b981">In Progress</div>
<div class="sub" style="left:864px;top:898px;font-size:14px;letter-spacing:-0.4px">Progress</div>
<div class="sk" style="left:1779px;width:60px;top:898px;text-align:right">75%</div>
<div class="bar" style="left:864px;top:925px;width:975px"><i style="width:75%;background:linear-gradient(90deg,#4bc79f,#10b981)"></i></div>
<div class="abs" style="left:847px;top:966px;width:1009px;height:106px;border:1px solid #e7e8ea;border-radius:8px;background:#fff"></div>
<div class="h3" style="left:864px;top:986px;font-size:15.300px">Mobile App Redesign</div>
<div class="badge" style="left:1694px;top:985px;width:61px;background:#f59e0b">Medium</div>
<div class="badge" style="left:1763px;top:985px;width:76px;background:#6366f1">Completed</div>
<div class="sub" style="left:864px;top:1020px;font-size:14px;letter-spacing:-0.4px">Progress</div>
<div class="sk" style="left:1779px;width:60px;top:1020px;text-align:right">100%</div>
</div>
<!--MAIN-->
</div>
<div id="sb"></div>
<svg class="abs" style="left:1905px;top:121px" width="15" height="911" viewBox="1905 121 15 911"><path d="M1908.300 1133" /><path d="M1912.500 126.300 L1917 132.500 L1908 132.500Z" fill="#8b8b8b" stroke="#8b8b8b" stroke-width="1" stroke-linejoin="round"/><rect x="1908" y="373" width="9" height="427" rx="4.500" fill="#8b8b8b"/><path d="M1912.500 1027.200 L1917 1021 L1908 1021Z" fill="#8b8b8b" stroke="#8b8b8b" stroke-width="1" stroke-linejoin="round"/></svg>


<!-- ================= TASKBAR ================= -->
<div id="task">
<div class="abs" style="left:0;top:-1033px;width:1920px;height:1080px">
<svg class="abs" style="left:0;top:0" width="1920" height="1080" viewBox="0 0 1920 1080">
<defs>
<linearGradient id="sun" x1="0" y1="0" x2="1" y2="1"><stop offset="0" stop-color="#f5c22e"/><stop offset="1" stop-color="#ee5d0c"/></linearGradient>
<linearGradient id="win" x1="0" y1="0" x2="1" y2="1"><stop offset="0" stop-color="#3cc8f8"/><stop offset="1" stop-color="#0a66cc"/></linearGradient>
<linearGradient id="teams" x1="0" y1="0" x2="1" y2="1"><stop offset="0" stop-color="#8b8cf0"/><stop offset="1" stop-color="#4b4fc0"/></linearGradient>
<linearGradient id="cop" x1="0" y1="0" x2="1" y2="1"><stop offset="0" stop-color="#2aa6e8"/><stop offset=".35" stop-color="#6fd06a"/><stop offset=".6" stop-color="#f4b52e"/><stop offset=".8" stop-color="#ef5a7a"/><stop offset="1" stop-color="#a85be8"/></linearGradient>
<linearGradient id="edge" x1="0" y1="0" x2="1" y2="1"><stop offset="0" stop-color="#2fb7e6"/><stop offset=".5" stop-color="#1b86d6"/><stop offset="1" stop-color="#0d4fa0"/></linearGradient>
<linearGradient id="edge2" x1="0" y1="1" x2="1" y2="0"><stop offset="0" stop-color="#2bbbd8"/><stop offset="1" stop-color="#6fdc58"/></linearGradient>
<linearGradient id="fold" x1="0" y1="0" x2="0" y2="1"><stop offset="0" stop-color="#ffd75e"/><stop offset="1" stop-color="#f4b62c"/></linearGradient>
<linearGradient id="vsc" x1="0" y1="0" x2="1" y2="0"><stop offset="0" stop-color="#1478c4"/><stop offset="1" stop-color="#33a9ee"/></linearGradient>
<g id="chromeico"><circle cx="0" cy="0" r="12" fill="#fff"/><path d="M0 0 L-10.390 -6 A12 12 0 0 1 10.390 -6 Z" fill="#e33b2e"/><path d="M0 0 L10.390 -6 A12 12 0 0 1 0 12 Z" fill="#fbc116"/><path d="M0 0 L0 12 A12 12 0 0 1 -10.390 -6 Z" fill="#2ba24c"/><path d="M0 -6 L10.390 -6 A12 12 0 0 0 -10.390 -6Z" fill="#e33b2e"/><circle cx="0" cy="0" r="5.600" fill="#fff"/><circle cx="0" cy="0" r="4.400" fill="#3f83f0"/></g>
</defs>
<!-- weather -->
<circle cx="31" cy="1055" r="10" fill="url(#sun)"/>
<circle cx="38" cy="1046" r="8" fill="#c42b1c"/>
<!-- windows -->
<g fill="url(#win)"><rect x="551" y="1045" width="11" height="11" rx="1"/><rect x="563" y="1045" width="11" height="11" rx="1"/><rect x="551" y="1057" width="11" height="11" rx="1"/><rect x="563" y="1057" width="11" height="11" rx="1"/></g>
<!-- search pill -->
<rect x="588.500" y="1040.500" width="218" height="31" rx="15.500" fill="#f7f0ea" stroke="#e2d6cb" stroke-width="1"/>
<circle cx="604.800" cy="1054.800" r="5.400" fill="none" stroke="#1f1f1f" stroke-width="1.600"/><path d="M608.800 1058.800 L612.800 1062.800" stroke="#1f1f1f" stroke-width="1.800" stroke-linecap="round"/>
<!-- gifts -->
<g><path d="M758 1052 L770 1050 L771 1064 L758 1065Z" fill="#1d6b4a"/><path d="M759 1056 L764 1060 L770 1054M759 1060 L764 1064 L770 1058" stroke="#e8f0e8" stroke-width="1.200" fill="none"/><path d="M761 1051 C761 1046 767 1046 767 1050" stroke="#b33" stroke-width="1.200" fill="none"/>
<rect x="772" y="1052" width="17" height="14" fill="#d63a2a"/><rect x="771" y="1050" width="19" height="4" fill="#e04a34"/><rect x="778.500" y="1050" width="4" height="16" fill="#f0b030"/><path d="M780.500 1050 C776 1044 772 1047 776 1050 M780.500 1050 C785 1044 789 1047 785 1050" stroke="#f0b030" stroke-width="2" fill="none"/>
<rect x="791" y="1056" width="11" height="8" fill="#9cc8ee"/><rect x="790" y="1054" width="13" height="3" fill="#b8d8f4"/><rect x="795.500" y="1054" width="2" height="10" fill="#d64a4a"/><path d="M796.500 1054 C794 1050 791 1052 794 1054 M796.500 1054 C799 1050 802 1052 799 1054" stroke="#d64a4a" stroke-width="1.300" fill="none"/></g>
<!-- task view -->
<rect x="819" y="1051" width="18" height="16" rx="1.500" fill="#1c1c1c"/><rect x="825" y="1045" width="18" height="15" rx="1.500" fill="#f6f3f0" opacity=".92"/><rect x="825" y="1051" width="12" height="9" fill="#b9b7b5"/>
<!-- teams -->
<g><circle cx="870" cy="1048.500" r="3.700" fill="#7f83ee"/><circle cx="881" cy="1050" r="2.800" fill="#6f73e0"/><rect x="877" y="1054" width="8" height="11" rx="3" fill="#5d62d2"/><rect x="866" y="1053.500" width="14" height="14" rx="4" fill="url(#teams)"/><rect x="862.500" y="1055.500" width="11" height="11" rx="2" fill="#3f43b0"/><path d="M865.500 1058.500h5M868 1058.500v5.500" stroke="#fff" stroke-width="1.300" fill="none"/></g>
<!-- copilot -->
<path d="M912 1046 C916 1044 921 1045 923 1049 L926 1056 C928 1060 931 1058 930 1054 C932 1060 930 1066 924 1067 C919 1068 916 1066 914 1062 L911 1055 C909 1051 906 1053 907 1057 C905 1051 907 1047 912 1046Z" fill="url(#cop)"/>
<!-- edge -->
<g><circle cx="962.800" cy="1056" r="12" fill="url(#edge)"/><path d="M951 1054 C953 1046 962 1042 969 1045 C975 1048 976 1055 972 1058 C968 1060 964 1058 966 1054 C962 1050 954 1052 951 1054Z" fill="url(#edge2)"/><path d="M958 1060 C958 1056 962 1053 966 1054 C964 1058 968 1061 973 1059 C970 1065 962 1067 958 1060Z" fill="#e9dfd4"/></g>
<!-- explorer -->
<g><path d="M995 1048 a1.500 1.500 0 0 1 1.500 -1.500 h6 l2 2.500 h13 a1.500 1.500 0 0 1 1.500 1.500 v14 a1.500 1.500 0 0 1 -1.500 1.500 h-21 a1.500 1.500 0 0 1 -1.500 -1.500Z" fill="#e9a81c"/><rect x="995" y="1050.500" width="24" height="16" rx="1.500" fill="url(#fold)"/><rect x="999.500" y="1060" width="15" height="6.500" rx="1.500" fill="#1578d0"/></g>
<rect x="1004" y="1071.500" width="6" height="3" rx="1.500" fill="#8a8580"/>
<!-- store -->
<g><path d="M1045 1050 C1045 1044 1056 1044 1056 1050" fill="none" stroke="#3fb6ee" stroke-width="2"/><rect x="1039" y="1049" width="23" height="18" rx="2.500" fill="#174a86"/><rect x="1046" y="1053.500" width="4" height="4" fill="#f25022"/><rect x="1051" y="1053.500" width="4" height="4" fill="#7fba00"/><rect x="1046" y="1058.500" width="4" height="4" fill="#00a4ef"/><rect x="1051" y="1058.500" width="4" height="4" fill="#ffb900"/></g>
<!-- chrome -->
<use href="#chromeico" x="1095" y="1056"/>
<!-- window app -->
<g><rect x="1127.500" y="1047.500" width="23" height="17" fill="#f4f4f4" stroke="#8f8f8f" stroke-width="1"/><rect x="1133" y="1050" width="9" height="12.500" fill="#1b7fd4"/><path d="M1129 1050.500h3M1129 1053.500h3M1129 1056.500h3M1129 1059.500h3M1143.500 1050.500h5M1143.500 1053.500h5" stroke="#777" stroke-width="1"/></g>
<!-- vscode -->
<g><path d="M1188.500 1047.500 L1173 1060.800 M1188.500 1064.500 L1173 1051.200" stroke="#1b7fd2" stroke-width="4.200" stroke-linecap="round" fill="none"/><path d="M1188 1044 L1193.800 1046.600 A1.500 1.500 0 0 1 1195 1048 V1064 A1.500 1.500 0 0 1 1193.800 1065.400 L1188 1068 Z" fill="#35a7ec"/><path d="M1188 1044 V1068 L1184 1064.500 V1047.500Z" fill="#2491de"/></g>
<!-- chrome S -->
<use href="#chromeico" x="1227" y="1056"/>
<circle cx="1236" cy="1047" r="8" fill="#c2185b"/>
<rect x="1224" y="1071.500" width="6" height="3" rx="1.500" fill="#8a8580"/>
<!-- tableau -->
<g><rect x="1260" y="1044.500" width="21.500" height="21.500" fill="#f3f6fa" stroke="#d9dde2" stroke-width=".6"/><path d="M1270.700 1046v19M1261.500 1055.300h18.500" stroke="#2d7ab8" stroke-width="1.300"/><path d="M1265.500 1047.500v5M1263 1050h5M1276 1047.500v5M1273.500 1050h5M1265.500 1058v5M1263 1060.500h5M1276 1058v5M1273.500 1060.500h5" stroke="#8fbbdc" stroke-width="1.100"/></g>
<rect x="1268" y="1071.500" width="6" height="3" rx="1.500" fill="#8a8580"/>
<!-- active chrome -->
<rect x="1296.500" y="1037.500" width="38" height="38" rx="4.500" fill="#f6eee6" stroke="#efe4d9" stroke-width="1"/>
<use href="#chromeico" x="1313" y="1056.500"/>
<circle cx="1324" cy="1047.500" r="8" fill="#2b2730"/><path d="M1317 1050 A8 8 0 0 0 1331 1050 L1329 1047 L1319 1047Z" fill="#3a5fb0"/><circle cx="1324" cy="1044.500" r="2.600" fill="#a9744f"/><path d="M1327 1041 A8 8 0 0 1 1332 1047 L1328 1050Z" fill="#9ec5ee"/><rect x="1319.500" y="1040.800" width="8" height="2" fill="#15151a"/>
<rect x="1307.500" y="1072" width="15" height="3" rx="1.500" fill="#0b6cbd"/>
<!-- taskpro -->
<rect x="1347" y="1044" width="24" height="24" fill="#ffffff"/>
<rect x="1352.500" y="1047.500" width="13" height="9" rx="1.500" fill="#e8f4fb" stroke="#2b6fa8" stroke-width="1.300"/><path d="M1357.500 1056.500v2.500h3v-2.500M1355 1059.500h8" stroke="#2b6fa8" stroke-width="1.200" fill="none"/><rect x="1354.500" y="1049.500" width="3.500" height="4" fill="#4aa84a"/><circle cx="1361.500" cy="1051.500" r="1.600" fill="none" stroke="#2b6fa8" stroke-width=".8"/>
<rect x="1356" y="1071.500" width="6" height="3" rx="1.500" fill="#8a8580"/>
<!-- tray -->
<path d="M1697.500 1058.300 L1702.300 1053.500 L1707 1058.300" fill="none" stroke="#1c1c1c" stroke-width="1.300"/>
<g fill="none" stroke="#1c1c1c" stroke-width="1.200"><path d="M1726.500 1055.500 A7.300 7.300 0 0 1 1740.500 1052.300"/><path d="M1737 1052.300 H1740.800 V1048.300"/><path d="M1730.500 1062.800 A7.300 7.300 0 0 1 1727.300 1060.500"/><path d="M1731 1060 H1727 V1064"/></g>
<circle cx="1738" cy="1060" r="4.200" fill="#0f78d4"/>
<g fill="none" stroke="#1c1c1c" stroke-width="1.300" stroke-linecap="round"><path d="M1758.500 1054 A10.500 10.500 0 0 1 1773.500 1054"/><path d="M1761 1056.700 A7 7 0 0 1 1771 1056.700"/><path d="M1763.500 1059.300 A3.600 3.600 0 0 1 1768.500 1059.300"/></g><circle cx="1766" cy="1061" r="1.100" fill="#1c1c1c"/>
<g fill="none" stroke="#1c1c1c" stroke-width="1.200" stroke-linejoin="round" stroke-linecap="round"><path d="M1782.500 1054 H1785 L1788.500 1050.800 V1061.200 L1785 1058 H1782.500Z"/><path d="M1790.800 1053.500 A3.500 3.500 0 0 1 1790.800 1058.500"/><path d="M1793 1051.500 A6.300 6.300 0 0 1 1793 1060.500"/><path d="M1795.300 1049.700 A9 9 0 0 1 1795.300 1062.300"/></g>
<g><path d="M1887 1060.500 C1889 1058 1888 1053 1889.500 1051.500 C1891 1049.500 1894.500 1049.500 1896 1051.500 C1897.500 1053 1896.500 1058 1898.500 1060.500Z" fill="#1c1c1c"/><path d="M1891 1062 A2 2 0 0 0 1895 1062Z" fill="#1c1c1c"/><path d="M1890.800 1053.500 h3 l-3 3.500 h3" stroke="#eedccb" stroke-width=".9" fill="none"/><path d="M1895.500 1049.500 h3 l-3 3.500 h3" stroke="#1c1c1c" stroke-width="1" fill="none"/></g>
</svg>
<div class="abs" style="left:34px;top:1039px;width:8px;text-align:center;font-size:10.500px;line-height:14px;color:#fff">1</div>
<div class="abs" style="left:50px;top:1041px;font-size:11.300px;line-height:14px;color:#1e1e1e;white-space:nowrap">77°F</div>
<div class="abs" style="left:50px;top:1057px;font-size:11.700px;line-height:14px;color:#555;white-space:nowrap">Sunny</div>
<div class="abs" style="left:624px;top:1049px;font-size:12.800px;line-height:16px;color:#555;white-space:nowrap">Search</div>
<div class="abs" style="left:1232px;top:1040px;width:8px;text-align:center;font-size:10px;line-height:14px;color:#fff">S</div>
<div class="abs" style="left:1347px;top:1060px;width:24px;text-align:center;font-size:4.500px;line-height:6px;color:#345;font-weight:700;white-space:nowrap">TaskPro</div>
<div class="abs" style="left:1796px;top:1041px;width:80px;text-align:right;font-size:11.400px;line-height:14px;color:#1c1c1c;white-space:nowrap">1:04 PM</div>
<div class="abs" style="left:1796px;top:1058px;width:80px;text-align:right;font-size:12px;line-height:14px;color:#1c1c1c;white-space:nowrap">12/11/2025</div>
</div>

</div>
</div>
</body>
</html>
